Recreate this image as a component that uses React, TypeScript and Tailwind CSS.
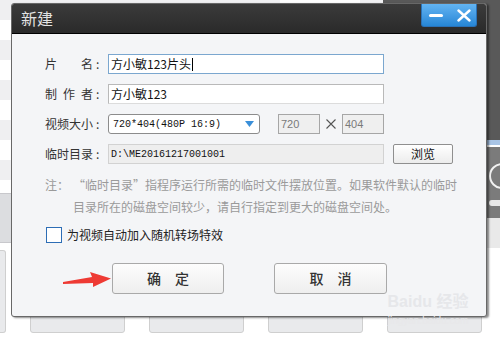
import React from "react";

const CJK = { fontFamily: '"Noto Sans CJK SC", "Noto Sans", sans-serif' };
const MONO = { fontFamily: '"Liberation Mono", "Noto Sans CJK SC", monospace' };

function Label({ chars }: { chars: string[] }) {
  return (
    <div className="flex w-[63px] shrink-0 items-center text-[12px] text-[#333]">
      <div className="flex w-[48px] justify-between">
        {chars.map((c, i) => (
          <span key={i}>{c}</span>
        ))}
      </div>
      <span className="ml-[3px]">:</span>
    </div>
  );
}

export default function App() {
  return (
    <div className="relative h-[340px] w-[500px] overflow-hidden bg-white" style={CJK}>
      {/* background application */}
      <div className="flex h-[340px] flex-col">
        <div className="flex h-[248px]">
          <div className="flex w-[11px] flex-col">
            <div className="h-[20px] bg-[#efeff1]" />
            <div className="h-[20px] bg-white" />
            <div className="h-[20px] bg-[#efeff1]" />
            <div className="h-[20px] bg-white" />
            <div className="h-[20px] bg-[#efeff1]" />
            <div className="h-[20px] bg-white" />
            <div className="h-[20px] bg-[#efeff1]" />
            <div className="h-[20px] bg-white" />
            <div className="h-[20px] bg-[#efeff1]" />
            <div className="h-[13px] bg-white" />
            <div className="h-[50px] border-y border-[#c8c8cc] bg-[#dcdde0]" />
          </div>
          <div className="flex-1 bg-[#f0f0f2]">
            <div className="ml-[269px] h-[3px] w-[80px] bg-white" />
          </div>
          <div className="flex w-[117px] flex-col">
            <div className="h-[140px] bg-[#595959]" />
            <div className="h-[5px] bg-[#a9c5e6]" />
            <div className="h-[2px] bg-white" />
            <div className="flex h-[71px] flex-col bg-[#7b7b7b] pl-[106px] pt-[16px]">
              <div className="h-[26px] w-[26px] rounded-full border-2 border-[#f2f2f2]" />
              <div className="mt-[11px] h-[6px] w-[20px] rounded-full bg-[#e8e8e8]" />
            </div>
            <div className="flex-1 bg-[#e9e9e9]" />
          </div>
        </div>
        <div className="flex gap-[24px] pt-[2px]">
          <div className="h-[83px] w-[6px] rounded-r-[3px] border border-l-0 border-[#cfcfcf] bg-[#e9eaec]" />
          <div className="h-[83px] w-[95px] rounded-[3px] border border-[#cfcfcf] bg-[#e9eaec]" />
          <div className="h-[83px] w-[95px] rounded-[3px] border border-[#cfcfcf] bg-[#e9eaec]" />
          <div className="h-[83px] w-[95px] rounded-[3px] border border-[#cfcfcf] bg-[#e9eaec]" />
          <div className="h-[83px] w-[95px] rounded-[3px] border border-[#cfcfcf] bg-[#e9eaec]" />
        </div>
      </div>

      {/* dialog window */}
      <div className="absolute left-[11px] top-[3px] flex h-[314px] w-[476px] flex-col overflow-hidden rounded-[3px] border border-[#686868] bg-[#f4f5f7] shadow-[2px_1px_2px_rgba(0,0,0,0.45)]">
        {/* title bar */}
        <div className="flex h-[30px] shrink-0 items-start justify-between border-b border-black bg-gradient-to-b from-[#3b3b3b] to-[#2a2a2a]">
          <div className="ml-[9px] mt-[5px] text-[16px] leading-[18px] text-[#e2e2e2]">新建</div>
          <div className="mr-[9px] flex h-[23px] w-[56px] items-center rounded-b-[3px] border border-t-0 border-[#2a72b8] bg-gradient-to-b from-[#62b4f2] to-[#2586d6]">
            <div className="ml-[7px] h-[3px] w-[14px] rounded-full bg-white" />
            <svg className="ml-[14px]" width="14" height="13" viewBox="0 0 14 13">
              <path d="M1.5 1.5 L12.5 11.5 M12.5 1.5 L1.5 11.5" stroke="white" strokeWidth="2.4" strokeLinecap="round" />
            </svg>
          </div>
        </div>

        {/* body */}
        <div className="relative flex flex-1 flex-col pl-[33px] pt-[20px]">
          <div className="flex h-[20px] items-center">
            <Label chars={["片", "名"]} />
            <div className="flex h-[20px] w-[276px] items-center border border-[#7ba7cf] bg-white pl-[2px] text-[12px] text-[#111]">
              方小敏123片头
              <span className="ml-[1px] h-[13px] w-px bg-black" />
            </div>
          </div>

          <div className="mt-[10px] flex h-[20px] items-center">
            <Label chars={["制", "作", "者"]} />
            <div className="flex h-[20px] w-[276px] items-center border border-[#b9b9b9] border-b-[#dcdcdc] bg-white pl-[2px] text-[12px] text-[#111]">
              方小敏123
            </div>
          </div>

          <div className="mt-[10px] flex h-[20px] items-center">
            <Label chars={["视", "频", "大", "小"]} />
            <div className="flex h-[20px] w-[152px] items-center justify-between rounded-[3px] border border-[#8c8c8c] bg-white pl-[4px] pr-[5px] text-[10px] text-[#111]" style={MONO}>
              <span>720*404(480P 16:9)</span>
              <svg width="9" height="6" viewBox="0 0 9 6">
                <path d="M0 0 H9 L4.5 6 Z" fill="#3a8fd9" />
              </svg>
            </div>
            <div className="ml-[18px] flex h-[20px] w-[42px] items-center border border-[#a6a6a6] bg-[#efefef] pl-[2px] text-[11px] text-[#7a7a7a]" style={{ fontFamily: '"Liberation Sans", sans-serif' }}>
              720
            </div>
            <div className="flex w-[22px] justify-center">
              <svg width="10" height="10" viewBox="0 0 10 10">
                <path d="M0.5 0.5 L9.5 9.5 M9.5 0.5 L0.5 9.5" stroke="#555" strokeWidth="1.1" />
              </svg>
            </div>
            <div className="flex h-[20px] w-[42px] items-center border border-[#a6a6a6] bg-[#efefef] pl-[2px] text-[11px] text-[#7a7a7a]" style={{ fontFamily: '"Liberation Sans", sans-serif' }}>
              404
            </div>
          </div>

          <div className="mt-[10px] flex h-[20px] items-center">
            <Label chars={["临", "时", "目", "录"]} />
            <div className="flex h-[20px] w-[276px] items-center border border-[#d2d2d2] bg-[#eeeeee] pl-[2px] text-[10px] text-[#111]" style={MONO}>
              D:\ME20161217001001
            </div>
            <div className="ml-[9px] flex h-[20px] w-[60px] items-center justify-center rounded-[2px] border border-[#8f8f8f] bg-gradient-to-b from-white to-[#ececec] text-[12px] text-[#111]">
              浏览
            </div>
          </div>

          <div className="mt-[10px] flex text-[12px] leading-[22px] text-[#9a9a9a]">
            <span className="w-[28px] shrink-0">注：</span>
            <div className="whitespace-nowrap">
              “临时目录”指程序运行所需的临时文件摆放位置。如果软件默认的临时
              <br />
              目录所在的磁盘空间较少，请自行指定到更大的磁盘空间处。
            </div>
          </div>

          <div className="ml-[1px] mt-[9px] flex h-[16px] items-center">
            <div className="h-[16px] w-[16px] border-[1.5px] border-[#2d6db5] bg-white" />
            <span className="ml-[5px] text-[12px] text-[#222]">为视频自动加入随机转场特效</span>
          </div>

          <div className="mt-[20px] flex">
            <div className="ml-[67px] flex h-[31px] w-[112px] items-center justify-center rounded-[3px] border border-[#a9a9a9] bg-gradient-to-b from-[#fdfdfd] to-[#eeeeee] text-[14px] font-medium text-[#333]">
              确　定
            </div>
            <div className="ml-[50px] flex h-[31px] w-[113px] items-center justify-center rounded-[3px] border border-[#a9a9a9] bg-gradient-to-b from-[#fdfdfd] to-[#eeeeee] text-[14px] font-medium text-[#333]">
              取　消
            </div>
          </div>

          {/* red arrow annotation */}
          <svg className="absolute left-[51px] top-[238px]" width="50" height="20" viewBox="0 0 50 20">
            <polygon points="0,10 29,5 27,0 48,6.5 30,15 30,11 0,12" fill="#ee3a34" />
          </svg>
        </div>
      </div>

      {/* watermark */}
      <div className="pointer-events-none absolute left-[384px] top-[294px] flex w-[88px] flex-col items-center leading-none">
        <div className="text-[16px] font-bold text-[#e6e7ea]" style={{ fontFamily: '"Liberation Sans", "Noto Sans CJK SC", sans-serif' }}>
          Baidu 经验
        </div>
        <div className="mt-[6px] text-[10px] text-[#e8e8ea]" style={{ fontFamily: '"Liberation Sans", sans-serif' }}>
          jingyan.baidu.com
        </div>
      </div>
    </div>
  );
}
